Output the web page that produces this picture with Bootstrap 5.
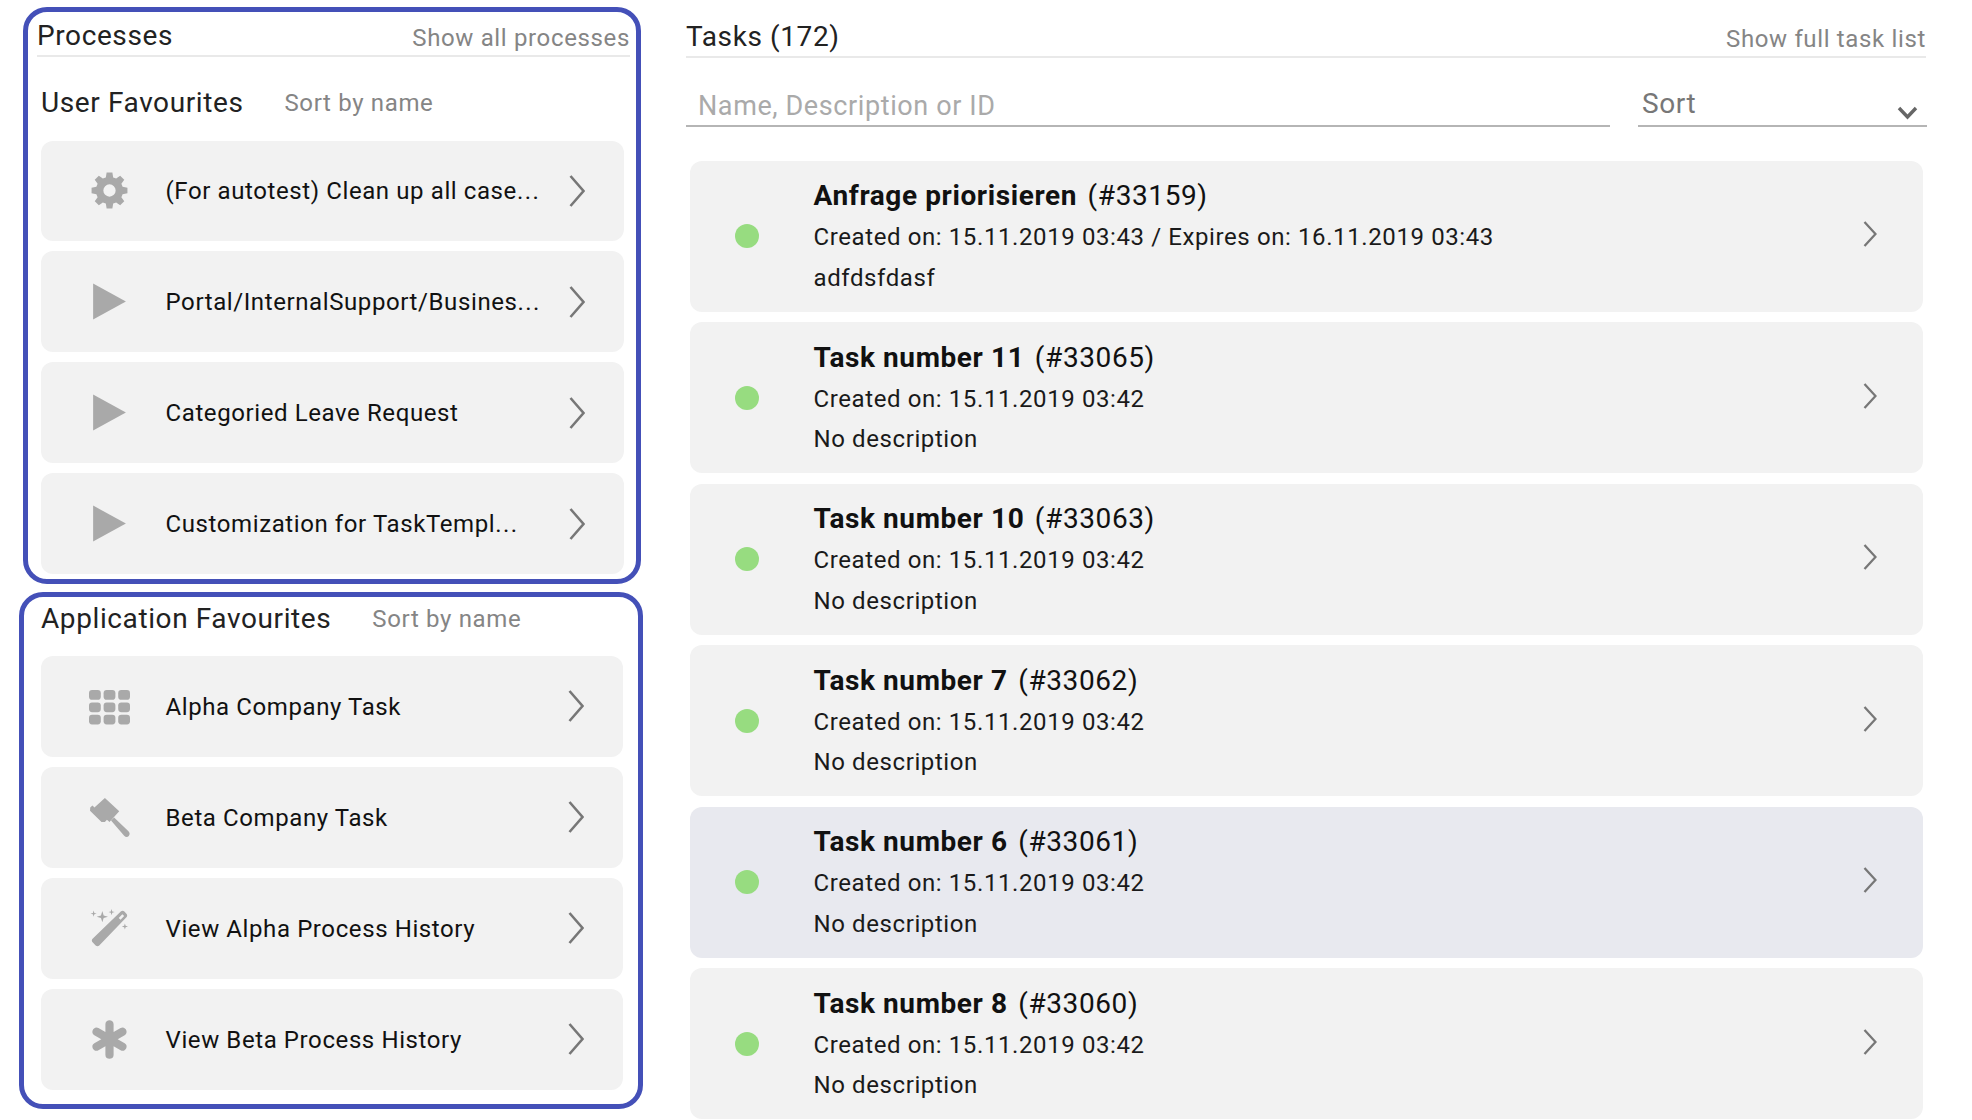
<!DOCTYPE html>
<html lang="en">
<head>
<meta charset="utf-8">
<title>Dashboard</title>
<link href="https://cdn.jsdelivr.net/npm/bootstrap@5.3.0/dist/css/bootstrap.min.css" rel="stylesheet">
<style>
html,body{height:1120px;overflow:hidden;background:#fff}
body{font-family:Roboto,"Liberation Sans",sans-serif;color:#111}
.side-col{width:643px;flex:none;padding-top:7px}
.main-col{width:1241px;flex:none;margin-left:43px;padding-top:22px}
.hl-box{border:5px solid #4450b8;border-radius:24px}
.hl-one{margin-left:23px;width:618px;height:577px;padding:9px 6px 0 9px}
.hl-two{margin-left:19px;width:624px;height:517px;margin-top:8px;padding:2px 15px 0 17px}
.sec-head{display:flex;justify-content:space-between;align-items:center;height:35.5px;border-bottom:2px solid #e9e9e9;font-size:28px;font-weight:400;letter-spacing:.6px;color:#222}
.sec-head span{padding-bottom:3px}
.main-col .sec-head{margin-right:1px}
.sec-head a,.sort-link{font-size:24px;color:#858585;letter-spacing:.65px;text-decoration:none}
.fav-title{display:flex;align-items:center;gap:41px;font-size:28px;letter-spacing:.6px;color:#222;height:40px;margin:0}
.hl-one .fav-title{margin:27px 0 0 4px;height:38px}
.fav-list{display:flex;flex-direction:column;gap:10.2px;margin-top:17px}
.hl-one .fav-list{margin:19px 6.5px 0 4px}
.fav-card{display:flex;align-items:center;height:100.8px;background:#f2f2f2;border-radius:12px;font-size:24px;letter-spacing:.6px;color:#111;padding:0 39px 0 48px}
.fav-ico{width:41px;height:41px;flex:none;fill:#a9a9a9}
.fav-text{margin-left:35.5px;padding-top:1px;flex:1;min-width:0;white-space:nowrap}
.more-dots{letter-spacing:1.4px}
.chev-l{width:16px;height:32px;flex:none;fill:none;stroke:#777;stroke-width:2.6}
.filter-row{display:flex;gap:28px;height:69.5px;align-items:flex-end}
.search-in.form-control,.sort-sel.form-select{border:0;border-bottom:2.5px solid #b5b5b5;border-radius:0;box-shadow:none;background-color:transparent;height:51px;font-size:28px;letter-spacing:.6px}
.search-in.form-control{flex:none;width:924px;padding:10px 0 0 12px;font-size:27px}
.search-in.form-control::placeholder{color:#aaa;opacity:1}
.sort-sel.form-select{width:289px;flex:none;color:#777;padding:6px 0 0 4px;background-position:right 9px bottom 5px;background-size:21px 14px;background-image:url("data:image/svg+xml,%3Csvg xmlns='http://www.w3.org/2000/svg' viewBox='0 0 21 14'%3E%3Cpath d='M2 2l8.5 9 8.5-9' fill='none' stroke='%23666' stroke-width='3.4'/%3E%3C/svg%3E")}
.task-list{display:flex;flex-direction:column;gap:10.6px;margin:33.5px 0 0 4px;width:1233px}
.task-card{display:flex;align-items:center;height:151px;flex:none;background:#f2f2f2;border-radius:12px;padding:0 46px 0 44.5px}
.task-card.is-active{background:#e8e9ef}
.state-dot{width:24px;height:24px;border-radius:50%;background:#97dc80;flex:none}
.task-body{margin-left:55px;flex:1;min-width:0;padding-top:1px}
.task-name{font-size:28px;letter-spacing:.6px;line-height:41px;margin-bottom:1px;color:#111}
.task-name b{font-weight:700;margin-right:3px}
.task-line{font-size:24px;letter-spacing:.6px;line-height:40.5px;color:#1a1a1a}
.chev-t{width:14px;height:26px;flex:none;fill:none;stroke:#777;stroke-width:2.3;margin-bottom:4px}
</style>
</head>
<body>
<div class="d-flex">
  <div class="side-col">
    <section class="hl-box hl-one">
      <div class="sec-head"><span>Processes</span><a href="#">Show all processes</a></div>
      <div class="fav-title"><span>User Favourites</span><a class="sort-link" href="#">Sort by name</a></div>
      <div class="fav-list">
        <div class="fav-card">
          <svg class="fav-ico" viewBox="0 0 40 40"><path fill-rule="evenodd" d="M17.2 2.5h5.6l.8 4.7 2.9 1.2 3.9-2.8 4 4-2.8 3.9 1.2 2.9 4.7.8v5.6l-4.7.8-1.2 2.9 2.8 3.9-4 4-3.9-2.8-2.9 1.2-.8 4.7h-5.6l-.8-4.7-2.9-1.2-3.9 2.8-4-4 2.8-3.9-1.2-2.9-4.7-.8v-5.6l4.7-.8 1.2-2.9-2.8-3.9 4-4 3.9 2.8 2.9-1.2zM20 14a6 6 0 1 0 0 12 6 6 0 0 0 0-12z"/></svg>
          <span class="fav-text">(For autotest) Clean up all case<span class="more-dots">...</span></span>
          <svg class="chev-l" viewBox="0 0 16 32"><path d="M1.5 1l13 15-13 15"/></svg>
        </div>
        <div class="fav-card">
          <svg class="fav-ico" viewBox="0 0 40 40"><path d="M4 2.5L36 20 4 37.5z"/></svg>
          <span class="fav-text">Portal/InternalSupport/Busines<span class="more-dots">...</span></span>
          <svg class="chev-l" viewBox="0 0 16 32"><path d="M1.5 1l13 15-13 15"/></svg>
        </div>
        <div class="fav-card">
          <svg class="fav-ico" viewBox="0 0 40 40"><path d="M4 2.5L36 20 4 37.5z"/></svg>
          <span class="fav-text">Categoried Leave Request</span>
          <svg class="chev-l" viewBox="0 0 16 32"><path d="M1.5 1l13 15-13 15"/></svg>
        </div>
        <div class="fav-card">
          <svg class="fav-ico" viewBox="0 0 40 40"><path d="M4 2.5L36 20 4 37.5z"/></svg>
          <span class="fav-text">Customization for TaskTempl<span class="more-dots">...</span></span>
          <svg class="chev-l" viewBox="0 0 16 32"><path d="M1.5 1l13 15-13 15"/></svg>
        </div>
      </div>
    </section>
    <section class="hl-box hl-two">
      <div class="fav-title"><span>Application Favourites</span><a class="sort-link" href="#">Sort by name</a></div>
      <div class="fav-list">
        <div class="fav-card">
          <svg class="fav-ico" viewBox="0 0 40 40"><g><rect x="0" y="4" width="11.500" height="9.500" rx="3"/><rect x="14.250" y="4" width="11.500" height="9.500" rx="3"/><rect x="28.500" y="4" width="11.500" height="9.500" rx="3"/><rect x="0" y="16" width="11.500" height="9.500" rx="3"/><rect x="14.250" y="16" width="11.500" height="9.500" rx="3"/><rect x="28.500" y="16" width="11.500" height="9.500" rx="3"/><rect x="0" y="28" width="11.500" height="9.500" rx="3"/><rect x="14.250" y="28" width="11.500" height="9.500" rx="3"/><rect x="28.500" y="28" width="11.500" height="9.500" rx="3"/></g></svg>
          <span class="fav-text">Alpha Company Task</span>
          <svg class="chev-l" viewBox="0 0 16 32"><path d="M1.5 1l13 15-13 15"/></svg>
        </div>
        <div class="fav-card">
          <svg class="fav-ico" viewBox="0 0 40 40"><path d="M15.5 1l14 13-9.500 10.500-2.500-2.300-2 2.200-3.300-.1L1 13.500l.2-3.200 2.200-1.900 1.900 1.800zM21.500 23l3-3 14 13.500c1.500 1.500 1.500 3.200.3 4.500s-3 1.300-4.500-.2z"/></svg>
          <span class="fav-text">Beta Company Task</span>
          <svg class="chev-l" viewBox="0 0 16 32"><path d="M1.5 1l13 15-13 15"/></svg>
        </div>
        <div class="fav-card">
          <svg class="fav-ico" viewBox="0 0 40 40"><path fill-rule="evenodd" d="M31 3.500c1-1 2.500-1 3.500 0l2 2c1 1 1 2.500 0 3.500L10 36.500c-1 1-2.500 1-3.500 0l-3-3c-1-1-1-2.500 0-3.500zM32.500 6l-3.500 3.700 1.800 1.700 3.500-3.500z"/><path d="M13 3l1.300 4.200 4.200 1.300-4.200 1.300L13 14l-1.300-4.200-4.200-1.300 4.200-1.300zM4.500 2.500l.7 2.300 2.300.7-2.300.7-.7 2.300-.7-2.300-2.300-.7 2.300-.7zM22 1l.7 2.300 2.300.7-2.300.7L22 7l-.7-2.300-2.300-.7 2.300-.7zM35 15l.7 2.300 2.300.7-2.300.7-.7 2.300-.7-2.300-2.300-.7 2.300-.7z"/></svg>
          <span class="fav-text">View Alpha Process History</span>
          <svg class="chev-l" viewBox="0 0 16 32"><path d="M1.5 1l13 15-13 15"/></svg>
        </div>
        <div class="fav-card">
          <svg class="fav-ico" viewBox="0 0 40 40"><path d="M16 5c0-5 8-5 8 0v7.800l6.800-3.900c4.400-2.500 8.400 4.400 4 6.900L28 19.700l6.800 3.900c4.400 2.500.4 9.400-4 6.900L24 26.600V35c0 5-8 5-8 0v-8.400l-6.800 3.900c-4.400 2.500-8.400-4.400-4-6.900l6.800-3.900-6.800-3.900c-4.400-2.500-.4-9.400 4-6.900l6.800 3.900z"/></svg>
          <span class="fav-text">View Beta Process History</span>
          <svg class="chev-l" viewBox="0 0 16 32"><path d="M1.5 1l13 15-13 15"/></svg>
        </div>
      </div>
    </section>
  </div>
  <main class="main-col">
    <div class="sec-head"><span>Tasks (172)</span><a href="#">Show full task list</a></div>
    <div class="filter-row">
      <input class="form-control search-in" type="text" placeholder="Name, Description or ID">
      <select class="form-select sort-sel"><option>Sort</option></select>
    </div>
    <div class="task-list">
      <div class="task-card">
        <span class="state-dot"></span>
        <div class="task-body">
          <div class="task-name"><b>Anfrage priorisieren</b> (#33159)</div>
          <div class="task-line">Created on: 15.11.2019 03:43 / Expires on: 16.11.2019 03:43</div>
          <div class="task-line">adfdsfdasf</div>
        </div>
        <svg class="chev-t" viewBox="0 0 14 26"><path d="M1.500 1l11 12-11 12"/></svg>
      </div>
      <div class="task-card">
        <span class="state-dot"></span>
        <div class="task-body">
          <div class="task-name"><b>Task number 11</b> (#33065)</div>
          <div class="task-line">Created on: 15.11.2019 03:42</div>
          <div class="task-line">No description</div>
        </div>
        <svg class="chev-t" viewBox="0 0 14 26"><path d="M1.500 1l11 12-11 12"/></svg>
      </div>
      <div class="task-card">
        <span class="state-dot"></span>
        <div class="task-body">
          <div class="task-name"><b>Task number 10</b> (#33063)</div>
          <div class="task-line">Created on: 15.11.2019 03:42</div>
          <div class="task-line">No description</div>
        </div>
        <svg class="chev-t" viewBox="0 0 14 26"><path d="M1.500 1l11 12-11 12"/></svg>
      </div>
      <div class="task-card">
        <span class="state-dot"></span>
        <div class="task-body">
          <div class="task-name"><b>Task number 7</b> (#33062)</div>
          <div class="task-line">Created on: 15.11.2019 03:42</div>
          <div class="task-line">No description</div>
        </div>
        <svg class="chev-t" viewBox="0 0 14 26"><path d="M1.500 1l11 12-11 12"/></svg>
      </div>
      <div class="task-card is-active">
        <span class="state-dot"></span>
        <div class="task-body">
          <div class="task-name"><b>Task number 6</b> (#33061)</div>
          <div class="task-line">Created on: 15.11.2019 03:42</div>
          <div class="task-line">No description</div>
        </div>
        <svg class="chev-t" viewBox="0 0 14 26"><path d="M1.500 1l11 12-11 12"/></svg>
      </div>
      <div class="task-card">
        <span class="state-dot"></span>
        <div class="task-body">
          <div class="task-name"><b>Task number 8</b> (#33060)</div>
          <div class="task-line">Created on: 15.11.2019 03:42</div>
          <div class="task-line">No description</div>
        </div>
        <svg class="chev-t" viewBox="0 0 14 26"><path d="M1.500 1l11 12-11 12"/></svg>
      </div>
    </div>
  </main>
</div>
<script src="https://cdn.jsdelivr.net/npm/bootstrap@5.3.0/dist/js/bootstrap.bundle.min.js"></script>
</body>
</html>
